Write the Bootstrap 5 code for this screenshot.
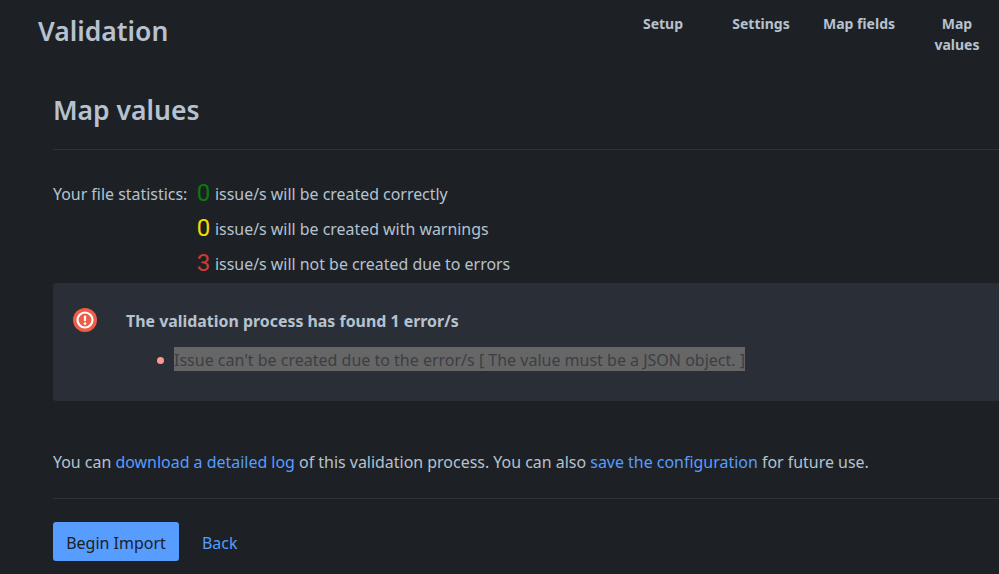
<!DOCTYPE html>
<html lang="en">
<head>
<meta charset="utf-8">
<title>Validation</title>
<link href="https://cdn.jsdelivr.net/npm/bootstrap@5.3.0/dist/css/bootstrap.min.css" rel="stylesheet">
<style>
html,body{height:100%;overflow:hidden}
body{background:#1d2125;color:#b6c2cf;font-family:"Noto Sans","Open Sans",sans-serif;font-size:15.92px;line-height:1.5}
.pg-shell{width:1030px;padding-left:38px}
.pg-top{height:91px}
.pg-title{font-size:26.5px;font-weight:600;line-height:38px;margin:12px 0 0;color:#b6c2cf}
.pg-steps{width:392px;margin:13px 24px 0 auto;padding:0;list-style:none}
.pg-steps li{width:98px;text-align:center;font-weight:700;font-size:14px;line-height:21px;color:#b6c2cf}
.pg-body{margin-left:15px}
.pg-h2{font-size:26.5px;font-weight:600;line-height:38px;margin:0;color:#b6c2cf}
.pg-head{padding-bottom:20px;border-bottom:1px solid #2c333a}
.pg-stats{margin-top:25px;width:500px}
.pg-label{width:142px;padding-top:7px;line-height:24px}
.pg-row{height:35px}
.pg-num{font-family:Roboto,sans-serif;font-size:24px;line-height:36px;width:17px;text-align:center;margin-right:3px}
.pg-num.is-ok{color:#0a7a0a}
.pg-num.is-warn{color:#f5d90a}
.pg-num.is-bad{color:#d13a30}
.pg-msg{padding-top:7px;line-height:24px}
.pg-flag{background:#2a2f37;border-radius:3px;height:118px;margin-top:3px;padding:25px 20px}
.pg-flag-ico{width:24px;height:24px;margin-right:29px;flex:none}
.pg-flag-title{font-weight:700;line-height:24px;margin-top:1px}
.pg-flag ul{margin:15px 0 0;padding-left:48px;list-style:none}
.pg-flag li{position:relative;font-size:16px}
.pg-flag li::before{content:"";position:absolute;left:-17px;top:9px;width:7px;height:7px;border-radius:50%;background:#fd9891}
.pg-sel{background:#666;color:#3a3f45;padding:2px 0 0}
.pg-foot-note{margin:49px 0 0;line-height:24px;font-size:15.94px}
.pg-foot-note a,.pg-back{color:#579dff;text-decoration:none}
.pg-rule{border-top:1px solid #2c333a;margin-top:24px}
.pg-actions{margin-top:23px}
.pg-go{background:#579dff;border:0;color:#1d2125;border-radius:3px;width:126px;height:39px;font-size:16px;padding:2px 0 0}
.pg-back{margin-left:23px;padding-top:4px}
</style>
</head>
<body>
<div class="pg-shell">
  <div class="pg-top d-flex justify-content-between align-items-start">
    <h1 class="pg-title">Validation</h1>
    <ol class="pg-steps d-flex">
      <li>Setup</li>
      <li>Settings</li>
      <li>Map fields</li>
      <li>Map<br>values</li>
    </ol>
  </div>
  <div class="pg-body">
    <div class="pg-head"><h2 class="pg-h2">Map values</h2></div>
    <div class="pg-stats d-flex">
      <div class="pg-label">Your file statistics:</div>
      <div>
        <div class="pg-row d-flex"><span class="pg-num is-ok">0</span><span class="pg-msg">issue/s will be created correctly</span></div>
        <div class="pg-row d-flex"><span class="pg-num is-warn">0</span><span class="pg-msg">issue/s will be created with warnings</span></div>
        <div class="pg-row d-flex"><span class="pg-num is-bad">3</span><span class="pg-msg">issue/s will not be created due to errors</span></div>
      </div>
    </div>
    <div class="pg-flag d-flex">
      <svg class="pg-flag-ico" viewBox="0 0 24 24" aria-hidden="true">
        <circle cx="12" cy="12" r="12" fill="#ef5c48"/>
        <circle cx="12" cy="12" r="7.5" fill="none" stroke="#fff" stroke-width="2.2"/>
        <rect x="10.9" y="7.4" width="2.2" height="5.8" rx="1" fill="#fff"/>
        <circle cx="12" cy="15.6" r="1.3" fill="#fff"/>
      </svg>
      <div>
        <div class="pg-flag-title">The validation process has found 1 error/s</div>
        <ul><li><span class="pg-sel">Issue can't be created due to the error/s [ The value must be a JSON object. ]</span></li></ul>
      </div>
    </div>
    <p class="pg-foot-note">You can <a href="#">download a detailed log</a> of this validation process. You can also <a href="#">save the configuration</a> for future use.</p>
    <div class="pg-rule"></div>
    <div class="pg-actions d-flex align-items-center">
      <button type="button" class="btn pg-go">Begin Import</button>
      <a href="#" class="pg-back">Back</a>
    </div>
  </div>
</div>
</body>
</html>
